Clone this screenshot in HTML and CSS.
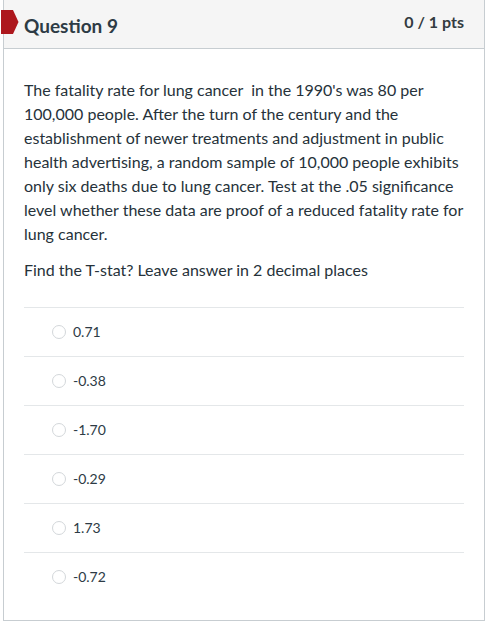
FILE: index.html
```html
<!DOCTYPE html>
<html lang="en">
<head>
<meta charset="utf-8">
<title>Question 9</title>
<link rel="stylesheet" href="styles.css">
</head>
<body>
<div class="question">
  <svg class="flag" width="18" height="26" viewBox="0 0 18 26" aria-hidden="true">
    <polygon points="0,0 12,0 17.5,12 12,24 0,24" fill="#ad171d"/>
  </svg>
  <div class="header">
    <h2 class="title">Question 9</h2>
    <div class="points">0 / 1 pts</div>
  </div>
  <div class="body">
    <p class="text">The fatality rate for lung cancer&nbsp; in the 1990's was 80 per 100,000 people. After the turn of the century and the establishment of newer treatments and adjustment in public health advertising, a random sample of 10,000 people exhibits only six deaths due to lung cancer. Test at the .05 significance level whether these data are proof of a reduced fatality rate for lung cancer.</p>
    <p class="text">Find the T-stat? Leave answer in 2 decimal places</p>
    <div class="answers">
      <div class="answer"><span class="radio"></span><span class="label">0.71</span></div>
      <div class="answer"><span class="radio"></span><span class="label">-0.38</span></div>
      <div class="answer"><span class="radio"></span><span class="label">-1.70</span></div>
      <div class="answer"><span class="radio"></span><span class="label">-0.29</span></div>
      <div class="answer"><span class="radio"></span><span class="label">1.73</span></div>
      <div class="answer"><span class="radio"></span><span class="label">-0.72</span></div>
    </div>
  </div>
</div>
</body>
</html>
```
FILE: styles.css
```css
* { box-sizing: border-box; }
html, body { margin: 0; padding: 0; background: #ffffff; }
body {
  font-family: Lato, "Noto Sans", sans-serif;
  color: #2d3b45;
}
.question {
  position: relative;
  margin-left: 3px;
  width: 482px;
  border: 1px solid #c7cdd1;
  border-top: none;
  background: #fff;
}
.flag {
  position: absolute;
  left: -3px;
  top: 10px;
}
.header {
  height: 49px;
  background: #f5f5f5;
  border-bottom: 1px solid #c7cdd1;
  display: flex;
  justify-content: space-between;
  align-items: flex-start;
  padding: 0 20px;
}
.title {
  margin: 0;
  padding-top: 14px;
  font-size: 19px;
  line-height: 24px;
  font-weight: 700;
  color: #2d3b45;
}
.points {
  padding-top: 12px;
  font-size: 16px;
  line-height: 20px;
  font-weight: 700;
  color: #333b40;
}
.body {
  padding: 29px 20px 19px;
}
.text {
  margin: 0 0 12px;
  font-size: 16px;
  line-height: 24px;
  color: #26323a;
}
.answers {
  margin-top: 25px;
}
.answer {
  height: 49px;
  border-top: 1px solid #e4e7e9;
  display: flex;
  align-items: center;
  padding-left: 28px;
}
.radio {
  width: 14px;
  height: 14px;
  border-radius: 50%;
  border: 1px solid #d3d7da;
  background: #fff;
  margin-right: 7px;
  flex: none;
}
.label {
  font-size: 14px;
  line-height: 18px;
  color: #2d3b45;
}
```
